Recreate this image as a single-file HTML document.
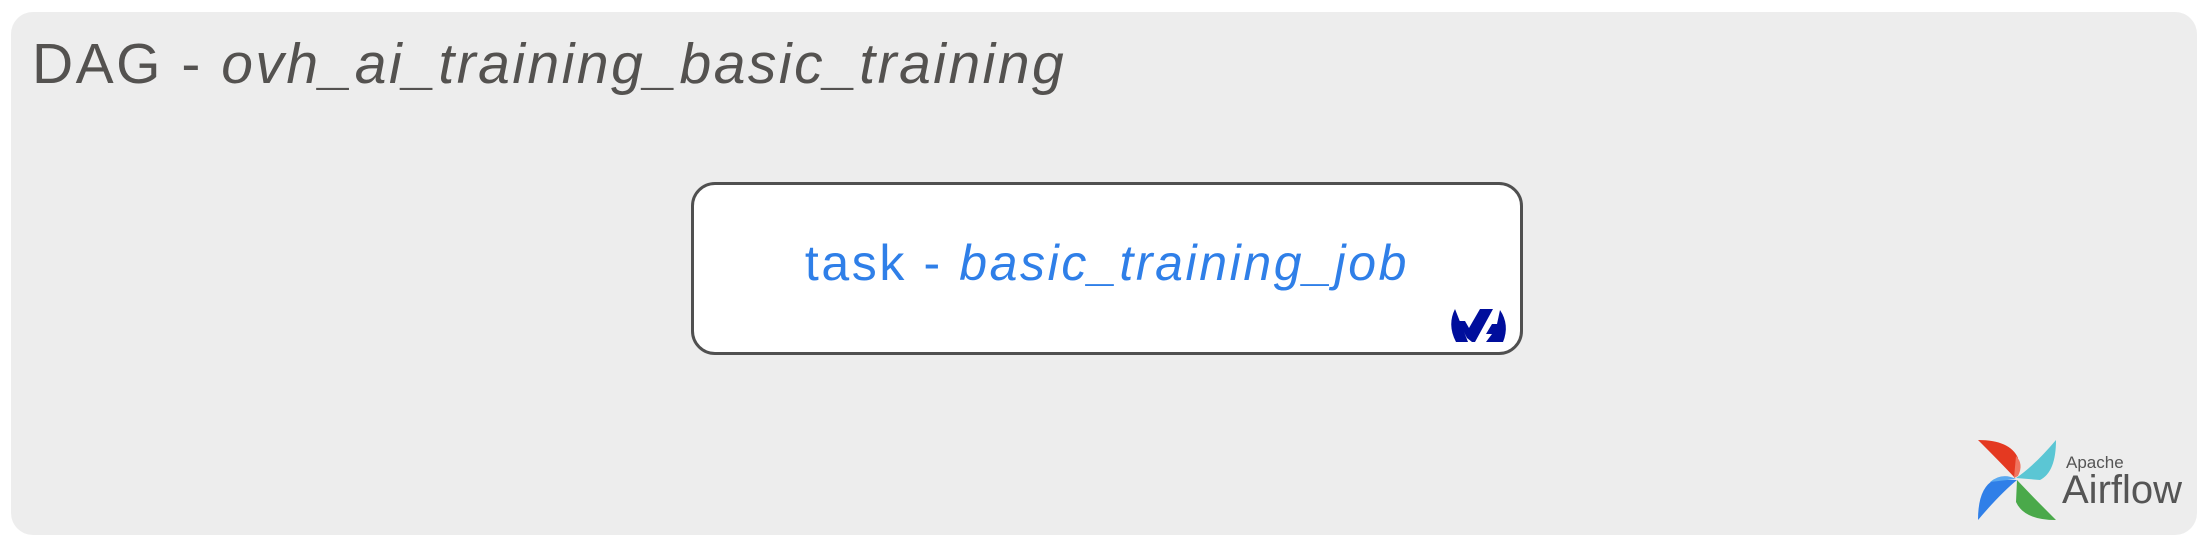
<!DOCTYPE html>
<html><head><meta charset="utf-8"><style>
html,body{margin:0;padding:0;background:#fff;width:2208px;height:546px;overflow:hidden}
.panel{position:absolute;left:11px;top:12px;width:2186px;height:523px;background:#ededed;border-radius:22px}
.title{position:absolute;left:32px;top:36px;font-family:"Liberation Sans",sans-serif;font-size:57px;letter-spacing:2.5px;color:#545250;white-space:nowrap;line-height:1}
.box{position:absolute;left:691px;top:182px;width:826px;height:167px;border:3px solid #505050;border-radius:24px;background:#fff}
.task{position:absolute;left:0;right:0;top:53px;text-align:center;font-family:"Liberation Sans",sans-serif;font-size:50px;letter-spacing:2.6px;color:#2f7fe8;line-height:1}
i{font-style:italic}
</style></head><body>
<div class="panel"></div>
<div class="title">DAG - <i>ovh_ai_training_basic_training</i></div>
<div class="box"><div class="task">task - <i>basic_training_job</i></div>
<svg style="position:absolute;left:756px;top:122px" width="60" height="38" viewBox="0 0 60 38">
<path d="M5 2 Q-3 18 6 35 L18 35 Z" fill="#000e9c"/>
<path d="M8 14 L17 31 L22 35 L25 35 L43 2 L30 2 L19 21 L15 14 Z" fill="#000e9c"/>
<path d="M50 3 Q60 18 53 35 L36 35 L42 27 L36 27 L42 17 L47 17 Z" fill="#000e9c"/>
</svg></div>
<svg style="position:absolute;left:1976px;top:438px" width="82" height="84" viewBox="0 0 82 84">
<path d="M2 2 Q34 2 42 20 L39 40 Q26 26 2 2 Z" fill="#e43921"/>
<path d="M40 18 Q48 26 42 38 L38 40 Z" fill="#f07560"/>
<path d="M80 2 Q80 34 64 42 L40 40 Q58 28 80 2 Z" fill="#5bc6d4"/>
<path d="M80 82 Q48 82 40 64 L41 42 Q56 58 80 82 Z" fill="#4aa94a"/>
<path d="M2 82 Q2 50 18 42 L41 42 Q24 56 2 82 Z" fill="#2f7fe8"/>
<path d="M14 44 Q26 34 40 41 Z" fill="#5aa9f0"/>
</svg>
<div style="position:absolute;left:2066px;top:453px;font-family:'Liberation Sans',sans-serif;font-size:17px;color:#555">Apache</div>
<div style="position:absolute;left:2062px;top:470px;font-family:'Liberation Sans',sans-serif;font-size:40px;color:#555;line-height:1">Airflow</div>
</body></html>
